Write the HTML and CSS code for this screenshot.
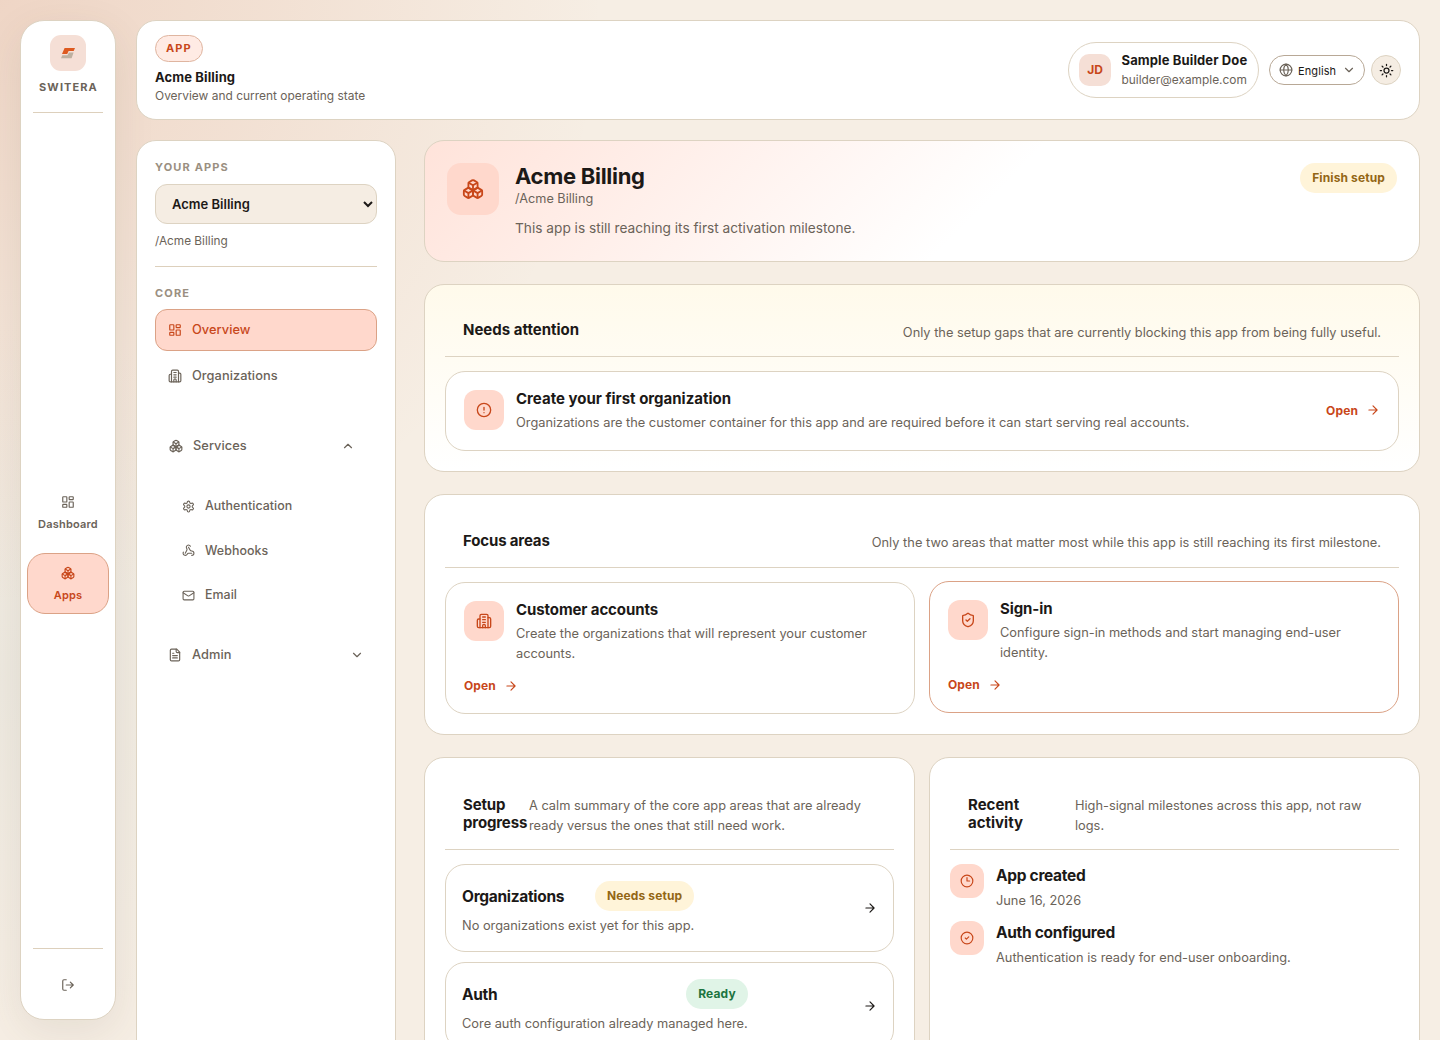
FILE: index.html
```html
<!DOCTYPE html>
<html lang="en">

<head>
    <meta charset="UTF-8">
    <meta name="viewport" content="width=device-width, initial-scale=1.0">
    <title>Acme Billing | Switera</title>

    <link rel="stylesheet" href="styles.css">
</head>

<body>
    <!-- shared icons -->
    <svg class="sprite" aria-hidden="true">
        <symbol id="i-dashboard" viewBox="0 0 24 24">
            <rect x="3" y="3" width="7" height="9" rx="1" />
            <rect x="14" y="3" width="7" height="5" rx="1" />
            <rect x="14" y="12" width="7" height="9" rx="1" />
            <rect x="3" y="16" width="7" height="5" rx="1" />
        </symbol>
        <symbol id="i-boxes" viewBox="0 0 24 24">
            <path d="M2.97 12.92A2 2 0 0 0 2 14.63v3.24a2 2 0 0 0 .97 1.71l3 1.8a2 2 0 0 0 2.06 0L12 19v-5.5l-5-3-4.03 2.42Z" />
            <path d="m7 16.5-4.74-2.85M7 16.5l5-3M7 16.5v5.17" />
            <path d="M12 13.5V19l3.97 2.38a2 2 0 0 0 2.06 0l3-1.8a2 2 0 0 0 .97-1.71v-3.24a2 2 0 0 0-.97-1.71L17 10.5l-5 3Z" />
            <path d="m17 16.5-5-3M17 16.5l4.74-2.85M17 16.5v5.17" />
            <path d="M7.97 4.42A2 2 0 0 0 7 6.13v4.37l5 3 5-3V6.13a2 2 0 0 0-.97-1.71l-3-1.8a2 2 0 0 0-2.06 0l-3 1.8Z" />
            <path d="M12 8 7.26 5.15M12 8l4.74-2.85M12 13.5V8" />
        </symbol>
        <symbol id="i-building" viewBox="0 0 24 24">
            <path d="M6 22V4a2 2 0 0 1 2-2h8a2 2 0 0 1 2 2v18Z" />
            <path d="M6 9H4a2 2 0 0 0-2 2v9a2 2 0 0 0 2 2h2M18 7h2a2 2 0 0 1 2 2v11a2 2 0 0 1-2 2h-2" />
            <path d="M10 6h4M10 10h4M10 14h4M10 22v-3a2 2 0 0 1 4 0v3" />
        </symbol>
        <symbol id="i-settings" viewBox="0 0 24 24">
            <path d="M12.22 2h-.44a2 2 0 0 0-2 2v.18a2 2 0 0 1-1 1.73l-.43.25a2 2 0 0 1-2 0l-.15-.08a2 2 0 0 0-2.73.73l-.22.38a2 2 0 0 0 .73 2.73l.15.1a2 2 0 0 1 1 1.72v.51a2 2 0 0 1-1 1.74l-.15.09a2 2 0 0 0-.73 2.73l.22.38a2 2 0 0 0 2.73.73l.15-.08a2 2 0 0 1 2 0l.43.25a2 2 0 0 1 1 1.73V20a2 2 0 0 0 2 2h.44a2 2 0 0 0 2-2v-.18a2 2 0 0 1 1-1.73l.43-.25a2 2 0 0 1 2 0l.15.08a2 2 0 0 0 2.73-.73l.22-.39a2 2 0 0 0-.73-2.73l-.15-.08a2 2 0 0 1-1-1.74v-.5a2 2 0 0 1 1-1.74l.15-.09a2 2 0 0 0 .73-2.73l-.22-.38a2 2 0 0 0-2.73-.73l-.15.08a2 2 0 0 1-2 0l-.43-.25a2 2 0 0 1-1-1.73V4a2 2 0 0 0-2-2z" />
            <circle cx="12" cy="12" r="3" />
        </symbol>
        <symbol id="i-webhook" viewBox="0 0 24 24">
            <path d="M18 16.98h-5.99c-1.1 0-1.95.94-2.48 1.9A4 4 0 0 1 2 17c.01-.7.2-1.4.57-2" />
            <path d="m6 17 3.13-5.78c.53-.97.1-2.18-.5-3.1a4 4 0 1 1 6.89-4.06" />
            <path d="m12 6 3.13 5.73C15.66 12.7 16.9 13 18 13a4 4 0 0 1 0 8" />
        </symbol>
        <symbol id="i-mail" viewBox="0 0 24 24">
            <rect x="2" y="4" width="20" height="16" rx="2" />
            <path d="m22 7-8.97 5.7a1.94 1.94 0 0 1-2.06 0L2 7" />
        </symbol>
        <symbol id="i-file" viewBox="0 0 24 24">
            <path d="M15 2H6a2 2 0 0 0-2 2v16a2 2 0 0 0 2 2h12a2 2 0 0 0 2-2V7Z" />
            <path d="M14 2v4a2 2 0 0 0 2 2h4M10 9H8M16 13H8M16 17H8" />
        </symbol>
        <symbol id="i-down" viewBox="0 0 24 24">
            <path d="m6 9 6 6 6-6" />
        </symbol>
        <symbol id="i-up" viewBox="0 0 24 24">
            <path d="m18 15-6-6-6 6" />
        </symbol>
        <symbol id="i-arrow" viewBox="0 0 24 24">
            <path d="M5 12h14M12 5l7 7-7 7" />
        </symbol>
        <symbol id="i-logout" viewBox="0 0 24 24">
            <path d="M9 21H5a2 2 0 0 1-2-2V5a2 2 0 0 1 2-2h4M16 17l5-5-5-5M21 12H9" />
        </symbol>
        <symbol id="i-globe" viewBox="0 0 24 24">
            <circle cx="12" cy="12" r="10" />
            <path d="M12 2a14.5 14.5 0 0 0 0 20 14.5 14.5 0 0 0 0-20M2 12h20" />
        </symbol>
        <symbol id="i-sun" viewBox="0 0 24 24">
            <circle cx="12" cy="12" r="4" />
            <path d="M12 2v2M12 20v2M4.93 4.93l1.41 1.41M17.66 17.66l1.41 1.41M2 12h2M20 12h2M6.34 17.66l-1.41 1.41M19.07 4.93l-1.41 1.41" />
        </symbol>
        <symbol id="i-alert" viewBox="0 0 24 24">
            <circle cx="12" cy="12" r="10" />
            <path d="M12 8v4M12 16h.01" />
        </symbol>
        <symbol id="i-shield" viewBox="0 0 24 24">
            <path d="M20 13c0 5-3.5 7.5-7.66 8.95a1 1 0 0 1-.67-.01C7.5 20.5 4 18 4 13V6a1 1 0 0 1 1-1c2 0 4.5-1.2 6.24-2.72a1.17 1.17 0 0 1 1.52 0C14.51 3.81 17 5 19 5a1 1 0 0 1 1 1z" />
            <path d="m9 12 2 2 4-4" />
        </symbol>
        <symbol id="i-clock" viewBox="0 0 24 24">
            <circle cx="12" cy="12" r="10" />
            <path d="M12 6v6h4.5" />
        </symbol>
        <symbol id="i-check" viewBox="0 0 24 24">
            <circle cx="12" cy="12" r="10" />
            <path d="m9 12 2 2 4-4" />
        </symbol>
    </svg>

    <div class="shell">
        <aside class="rail">
            <div class="brand">
                <div class="brand-mark">
                    <svg class="brand-logo" viewBox="0 0 14 11">
                        <path class="logo-top" d="M3.6 0H14l-1.3 3.1H7.6L6.2 6H1Z" />
                        <path class="logo-bottom" d="M12.6 4.4 10.6 10.2H0l1.3-3H6.5l1.4-2.8Z" />
                    </svg>
                </div>
                <span class="brand-name">SWITERA</span>
            </div>
            <nav class="rail-nav">
                <a class="rail-link">
                    <svg class="icon"><use href="#i-dashboard" /></svg>
                    <span>Dashboard</span>
                </a>
                <a class="rail-link active">
                    <svg class="icon"><use href="#i-boxes" /></svg>
                    <span>Apps</span>
                </a>
            </nav>
            <div class="rail-footer">
                <svg class="icon"><use href="#i-logout" /></svg>
            </div>
        </aside>

        <div class="workspace">
            <header class="topbar">
                <div class="topbar-text">
                    <span class="tag">APP</span>
                    <strong>Acme Billing</strong>
                    <span class="topbar-sub">Overview and current operating state</span>
                </div>
                <div class="topbar-actions">
                    <div class="user">
                        <div class="avatar">JD</div>
                        <div class="user-text">
                            <strong>Sample Builder Doe</strong>
                            <span>builder@example.com</span>
                        </div>
                    </div>
                    <button class="language">
                        <svg class="icon"><use href="#i-globe" /></svg>
                        <span>English</span>
                        <svg class="icon chevron"><use href="#i-down" /></svg>
                    </button>
                    <button class="theme">
                        <svg class="icon"><use href="#i-sun" /></svg>
                    </button>
                </div>
            </header>

            <div class="columns">
                <aside class="sidebar">
                    <h4 class="side-label">YOUR APPS</h4>
                    <select class="app-select">
                        <option>Acme Billing</option>
                    </select>
                    <p class="app-path">/Acme Billing</p>

                    <h4 class="side-label">CORE</h4>
                    <nav class="side-nav">
                        <a class="side-link active">
                            <svg class="icon"><use href="#i-dashboard" /></svg>
                            <span>Overview</span>
                        </a>
                        <a class="side-link">
                            <svg class="icon"><use href="#i-building" /></svg>
                            <span>Organizations</span>
                        </a>
                        <a class="side-link group">
                            <svg class="icon"><use href="#i-boxes" /></svg>
                            <span>Services</span>
                            <svg class="icon toggle"><use href="#i-up" /></svg>
                        </a>
                        <div class="side-children">
                            <a class="side-link">
                                <svg class="icon"><use href="#i-settings" /></svg>
                                <span>Authentication</span>
                            </a>
                            <a class="side-link">
                                <svg class="icon"><use href="#i-webhook" /></svg>
                                <span>Webhooks</span>
                            </a>
                            <a class="side-link">
                                <svg class="icon"><use href="#i-mail" /></svg>
                                <span>Email</span>
                            </a>
                        </div>
                        <a class="side-link">
                            <svg class="icon"><use href="#i-file" /></svg>
                            <span>Admin</span>
                            <svg class="icon toggle"><use href="#i-down" /></svg>
                        </a>
                    </nav>
                </aside>

                <main class="content">
                    <section class="card hero">
                        <div class="hero-icon">
                            <svg class="icon"><use href="#i-boxes" /></svg>
                        </div>
                        <div class="hero-text">
                            <h1>Acme Billing</h1>
                            <span>/Acme Billing</span>
                            <p>This app is still reaching its first activation milestone.</p>
                        </div>
                        <span class="pill warning">Finish setup</span>
                    </section>

                    <section class="card attention">
                        <div class="card-head">
                            <h2>Needs attention</h2>
                            <p>Only the setup gaps that are currently blocking this app from being fully useful.</p>
                        </div>
                        <div class="box task">
                            <div class="box-icon">
                                <svg class="icon"><use href="#i-alert" /></svg>
                            </div>
                            <div class="box-text">
                                <h3>Create your first organization</h3>
                                <p>Organizations are the customer container for this app and are required before it can start serving real accounts.</p>
                            </div>
                            <a class="open">Open <svg class="icon"><use href="#i-arrow" /></svg></a>
                        </div>
                    </section>

                    <section class="card focus">
                        <div class="card-head">
                            <h2>Focus areas</h2>
                            <p>Only the two areas that matter most while this app is still reaching its first milestone.</p>
                        </div>
                        <div class="focus-grid">
                            <div class="box">
                                <div class="box-main">
                                    <div class="box-icon">
                                        <svg class="icon"><use href="#i-building" /></svg>
                                    </div>
                                    <div class="box-text">
                                        <h3>Customer accounts</h3>
                                        <p>Create the organizations that will represent your customer accounts.</p>
                                    </div>
                                </div>
                                <a class="open">Open <svg class="icon"><use href="#i-arrow" /></svg></a>
                            </div>
                            <div class="box raised">
                                <div class="box-main">
                                    <div class="box-icon">
                                        <svg class="icon"><use href="#i-shield" /></svg>
                                    </div>
                                    <div class="box-text">
                                        <h3>Sign-in</h3>
                                        <p>Configure sign-in methods and start managing end-user identity.</p>
                                    </div>
                                </div>
                                <a class="open">Open <svg class="icon"><use href="#i-arrow" /></svg></a>
                            </div>
                        </div>
                    </section>

                    <div class="split">
                        <section class="card progress">
                            <div class="card-head">
                                <h2>Setup progress</h2>
                                <p>A calm summary of the core app areas that are already ready versus the ones that still need work.</p>
                            </div>
                            <div class="steps">
                                <div class="box step">
                                    <div class="step-text">
                                        <div class="step-title">
                                            <strong>Organizations</strong>
                                            <span class="pill warning">Needs setup</span>
                                        </div>
                                        <p>No organizations exist yet for this app.</p>
                                    </div>
                                    <svg class="icon"><use href="#i-arrow" /></svg>
                                </div>
                                <div class="box step">
                                    <div class="step-text">
                                        <div class="step-title">
                                            <strong>Auth</strong>
                                            <span class="pill ready">Ready</span>
                                        </div>
                                        <p>Core auth configuration already managed here.</p>
                                    </div>
                                    <svg class="icon"><use href="#i-arrow" /></svg>
                                </div>
                            </div>
                        </section>

                        <section class="card activity">
                            <div class="card-head">
                                <h2>Recent activity</h2>
                                <p>High-signal milestones across this app, not raw logs.</p>
                            </div>
                            <div class="events">
                                <div class="event">
                                    <div class="event-icon">
                                        <svg class="icon"><use href="#i-clock" /></svg>
                                    </div>
                                    <div class="event-text">
                                        <strong>App created</strong>
                                        <p>June 16, 2026</p>
                                    </div>
                                </div>
                                <div class="event">
                                    <div class="event-icon">
                                        <svg class="icon"><use href="#i-check" /></svg>
                                    </div>
                                    <div class="event-text">
                                        <strong>Auth configured</strong>
                                        <p>Authentication is ready for end-user onboarding.</p>
                                    </div>
                                </div>
                            </div>
                        </section>
                    </div>
                </main>
            </div>
        </div>
    </div>
</body>

</html>
```

FILE: styles.css
```css
* {
    box-sizing: border-box;
}

body {
    margin: 0;
    height: 100vh;
    overflow: hidden;
    font-family: "Inter", sans-serif;
    font-size: 13px;
    color: #1c1917;
    background:
        radial-gradient(circle at 0% 0%, rgba(210, 115, 75, 0.2), transparent 34%),
        radial-gradient(circle at 0% 65%, rgba(222, 224, 216, 0.35), transparent 22%),
        #f6eee4;
}

h1,
h2,
h3,
h4,
p {
    margin: 0;
}

.sprite {
    display: none;
}

.icon {
    width: 14px;
    height: 14px;
    flex-shrink: 0;
    fill: none;
    stroke: currentColor;
    stroke-width: 2;
    stroke-linecap: round;
    stroke-linejoin: round;
}

.shell {
    display: flex;
    gap: 20px;
    height: 100vh;
    padding: 20px;
}

/* left rail */
.rail {
    width: 96px;
    height: 1000px;
    flex-shrink: 0;
    display: flex;
    flex-direction: column;
    padding: 14px 6px 0;
    background: #fff;
    border: 1px solid #ddd3c2;
    border-radius: 24px;
    box-shadow: 0 12px 40px rgba(90, 80, 60, 0.1);
}

.brand {
    display: flex;
    flex-direction: column;
    align-items: center;
    gap: 9px;
    height: 78px;
    margin: 0 6px;
    border-bottom: 1px solid #ddd0bc;
}

.brand-mark {
    width: 36px;
    height: 36px;
    display: flex;
    align-items: center;
    justify-content: center;
    background: #f5dfd6;
    border-radius: 11px;
}

.brand-logo {
    width: 14px;
    height: 11px;
}

.logo-top {
    fill: #dd5a20;
}

.logo-bottom {
    fill: #bdb0a0;
}

.brand-name {
    font-size: 11px;
    line-height: 14px;
    font-weight: 700;
    letter-spacing: 1.1px;
    color: #6b6359;
    margin-right: -1px;
}

.rail-nav {
    flex: 1;
    display: flex;
    flex-direction: column;
    justify-content: center;
    gap: 10px;
    padding-top: 35px;
}

.rail-link {
    height: 61px;
    display: flex;
    flex-direction: column;
    align-items: center;
    justify-content: center;
    gap: 8px;
    font-size: 11px;
    line-height: 14px;
    font-weight: 600;
    letter-spacing: 0.2px;
    color: #6b6359;
    border: 1px solid transparent;
    border-radius: 18px;
}

.rail-link.active,
.side-link.active {
    color: #c8471a;
    background: #ffd8cc;
    border-color: #dba286;
}

.rail-footer {
    height: 71px;
    margin: 0 6px;
    padding-top: 2px;
    display: flex;
    justify-content: center;
    align-items: center;
    color: #6b6359;
    border-top: 1px solid #ddd0bc;
}

/* top bar */
.workspace {
    flex: 1;
    min-width: 0;
    display: flex;
    flex-direction: column;
    gap: 20px;
}

.topbar {
    height: 100px;
    flex-shrink: 0;
    display: flex;
    align-items: center;
    justify-content: space-between;
    padding: 0 18px;
    background: #fff;
    border: 1px solid #ddd3c2;
    border-radius: 20px;
}

.topbar strong {
    letter-spacing: 0.12px;
}

.topbar-text {
    display: flex;
    flex-direction: column;
    align-items: flex-start;
}

.topbar-text strong {
    margin-top: 7px;
    line-height: 17px;
}

.topbar-sub {
    margin-top: 1px;
    padding-bottom: 1px;
    font-size: 11.95px;
    line-height: 17px;
    color: #6b6359;
}

.tag {
    height: 27px;
    padding: 0 10px;
    font-size: 11px;
    line-height: 25px;
    font-weight: 700;
    letter-spacing: 1.1px;
    color: #c8471a;
    background: #ffebe4;
    border: 1px solid #dfb5a0;
    border-radius: 14px;
}

.topbar-actions {
    display: flex;
    align-items: center;
}

.user {
    width: 191px;
    height: 56px;
    display: flex;
    align-items: center;
    gap: 10.5px;
    padding-left: 10px;
    border: 1px solid #ddd3c2;
    border-radius: 28px;
}

.avatar {
    width: 32px;
    height: 32px;
    line-height: 32px;
    text-align: center;
    font-size: 12px;
    font-weight: 700;
    color: #c8471a;
    background: #f5dfd6;
    border-radius: 10px;
}

.user-text {
    display: flex;
    flex-direction: column;
    line-height: 19px;
    white-space: nowrap;
}

.user-text span {
    font-size: 11.9px;
    color: #6b6359;
}

.language,
.theme {
    height: 30px;
    display: flex;
    align-items: center;
    padding: 0;
    font-family: inherit;
    font-size: 11px;
    color: #1c1917;
    background: #fff;
    border: 1px solid #b8a896;
    border-radius: 15px;
}

.language {
    width: 96px;
    margin-left: 10px;
    padding-left: 9px;
}

.language span {
    margin: 2px 6px 0 5px;
    letter-spacing: 0.1px;
}

.language .icon {
    color: #6b6359;
}

.theme {
    width: 30px;
    margin-left: 6px;
    justify-content: center;
    background: #f5ede3;
    border-color: #ddd3c2;
}

.theme .icon {
    width: 15px;
    height: 15px;
}

/* app sidebar */
.columns {
    flex: 1;
    min-height: 0;
    display: flex;
    align-items: flex-start;
    gap: 28px;
}

.sidebar {
    width: 260px;
    height: 1000px;
    flex-shrink: 0;
    padding: 18px;
    background: #fff;
    border: 1px solid #ddd3c2;
    border-radius: 20px;
}

.side-label {
    font-size: 11px;
    line-height: 16px;
    font-weight: 700;
    letter-spacing: 1.15px;
    color: #9a8f81;
}

.app-select {
    width: 100%;
    height: 40px;
    margin-top: 9px;
    padding: 0 0 0 12px;
    font-family: inherit;
    font-size: 13px;
    font-weight: 600;
    color: #1c1917;
    background: #f5ede3;
    border: 1px solid #ddd3c2;
    border-radius: 12px;
}

.app-path {
    height: 43px;
    margin-bottom: 18px;
    padding-top: 8px;
    font-size: 11.8px;
    line-height: 18px;
    color: #6b6359;
    border-bottom: 1px solid #ddd0bc;
}

.side-nav {
    margin-top: 8px;
    display: flex;
    flex-direction: column;
    gap: 4px;
}

.side-link {
    height: 42px;
    display: flex;
    align-items: center;
    gap: 10px;
    padding: 0 12px;
    font-size: 12.8px;
    font-weight: 500;
    letter-spacing: 0.05px;
    color: #6b6359;
    border: 1px solid transparent;
    border-radius: 12px;
}

.side-link span {
    padding-bottom: 1px;
}

.side-link.group {
    margin: 24px 0 14px;
    padding: 0 21px 0 13px;
}

.toggle {
    margin-left: auto;
}

.side-children {
    display: flex;
    flex-direction: column;
    gap: 2.5px;
    margin: 0 0 14px 14px;
}

.side-children .side-link {
    font-size: 12.4px;
}

.side-children .icon {
    width: 13px;
    height: 13px;
}

/* cards */
.content {
    flex: 1;
    min-width: 0;
    display: flex;
    flex-direction: column;
    gap: 22px;
}

.card {
    padding: 20px;
    background: #fff;
    border: 1px solid #ddd3c2;
    border-radius: 20px;
}

.card p {
    font-size: 12.8px;
    line-height: 20px;
    color: #6b6359;
}

.hero {
    height: 122px;
    display: flex;
    align-items: flex-start;
    gap: 16px;
    padding: 22px;
    background: linear-gradient(135deg, #ffe3da 0%, #fff 56%);
}

.hero-icon {
    width: 52px;
    height: 52px;
    display: flex;
    align-items: center;
    justify-content: center;
    color: #c8471a;
    background: #ffd8cc;
    border-radius: 14px;
}

.hero-icon .icon {
    width: 22px;
    height: 22px;
}

.hero-text {
    flex: 1;
    color: #6b6359;
}

.hero-text h1 {
    font-size: 22px;
    line-height: 27px;
    letter-spacing: -0.3px;
    color: #1c1917;
}

.hero-text span {
    display: block;
    font-size: 12.7px;
    line-height: 17px;
}

.hero-text p {
    margin-top: 11px;
    font-size: 13.7px;
}

.pill {
    height: 30px;
    padding: 0 12px;
    font-size: 12px;
    line-height: 30px;
    font-weight: 700;
    letter-spacing: 0.12px;
    border-radius: 15px;
}

.pill.warning {
    color: #936615;
    background: #fff4d9;
}

.pill.ready {
    color: #1d7440;
    background: #e0f4e7;
}

.attention {
    height: 188px;
    background: linear-gradient(180deg, #fffaeb, #fff);
}

.focus {
    height: 241px;
}

.card-head {
    height: 52px;
    display: flex;
    align-items: flex-start;
    justify-content: space-between;
    padding: 18px 18px 0;
    border-bottom: 1px solid #ddd3c2;
}

.card-head h2,
.box-text h3 {
    font-size: 15px;
    line-height: 18px;
    font-weight: 700;
}

.attention h2 {
    margin-top: -2px;
}

.focus .card-head {
    height: 53px;
}

.focus h2 {
    margin-top: -1px;
    letter-spacing: -0.15px;
}

.focus .card-head p {
    letter-spacing: 0.03px;
}

.box {
    border: 1px solid #ddd3c2;
    border-radius: 20px;
    background: #fff;
}

.task {
    height: 80px;
    margin-top: 14px;
    display: flex;
    align-items: center;
    gap: 12px;
    padding: 0 18px 2px;
}

.task .box-text {
    padding-top: 2px;
}

.box-icon {
    width: 40px;
    height: 40px;
    flex-shrink: 0;
    display: flex;
    align-items: center;
    justify-content: center;
    color: #c8471a;
    background: #ffd8cc;
    border-radius: 12px;
}

.box-icon .icon {
    width: 16px;
    height: 16px;
}

.box-text {
    flex: 1;
}

.box-text p {
    margin-top: 5px;
}

.open {
    display: flex;
    align-items: center;
    gap: 8px;
    font-size: 12px;
    font-weight: 700;
    letter-spacing: 0.12px;
    color: #c8471a;
}

.focus-grid {
    display: grid;
    grid-template-columns: 1fr 1fr;
    gap: 14px;
    margin-top: 14px;
}

.focus-grid .box {
    height: 132px;
    padding: 18px;
}

.focus-grid h3 {
    letter-spacing: -0.1px;
}

.box-main {
    display: flex;
    gap: 12px;
    margin-bottom: 14px;
}

.raised {
    border-color: #dba286;
    transform: translateY(-1px);
}

.split {
    display: grid;
    grid-template-columns: 1fr 1fr;
    gap: 14px;
}

.split .card {
    height: 420px;
}

.split .card-head {
    height: 72px;
}

.progress h2 {
    width: 66px;
    flex-shrink: 0;
    letter-spacing: -0.15px;
}

.progress .card-head p {
    width: 347px;
    flex-shrink: 0;
}

.activity h2 {
    width: 70px;
}

.activity .card-head p {
    width: 306px;
}

.steps {
    display: flex;
    flex-direction: column;
    gap: 10px;
    margin-top: 14px;
}

.step {
    height: 88px;
    display: flex;
    align-items: center;
    justify-content: space-between;
    padding: 0 16px;
}

.step-title {
    display: flex;
    align-items: center;
    justify-content: space-between;
    margin-bottom: 5px;
}

.step-title strong {
    padding-top: 1px;
}

.step-title strong,
.event-text strong {
    font-size: 15.5px;
    font-weight: 700;
    letter-spacing: -0.3px;
}

.events {
    display: flex;
    flex-direction: column;
    gap: 10px;
    margin-top: 14px;
}

.event {
    display: flex;
    gap: 12px;
}

.event-icon {
    width: 34px;
    height: 34px;
    display: flex;
    align-items: center;
    justify-content: center;
    color: #c8471a;
    background: #ffd8cc;
    border-radius: 12px;
}

.event-text strong {
    display: block;
    line-height: 23px;
}

.event-text p {
    margin-top: 4px;
}
```
